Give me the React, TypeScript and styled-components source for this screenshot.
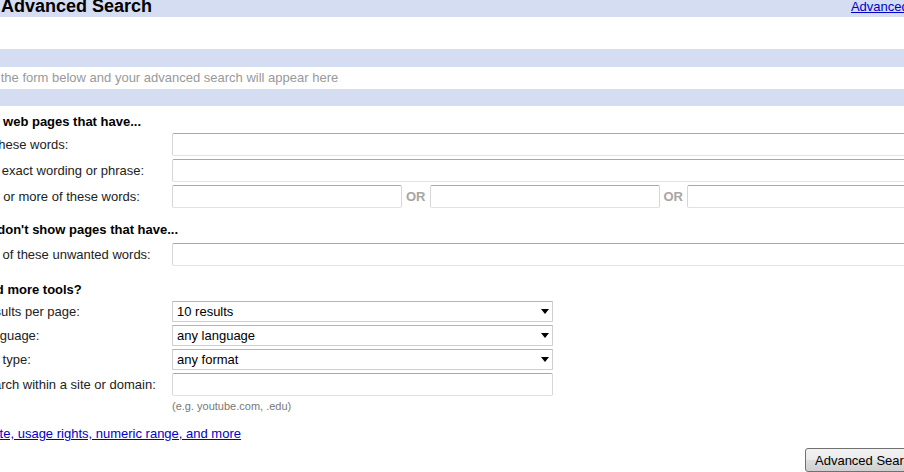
import React from "react";
import styled, { createGlobalStyle } from "styled-components";

const Global = createGlobalStyle`
  html, body { margin: 0; padding: 0; background: #fff; overflow: hidden; }
  body { font-family: "Liberation Sans", Arial, sans-serif; font-size: 13px; color: #222; }
`;

const Page = styled.div`
  width: 1013px;
  margin-left: -28px;
`;

const TopBar = styled.div`
  display: flex;
  align-items: flex-start;
  height: 17px;
  background: #d5ddf3;
  padding: 0 4px 0 29px;
`;

const Title = styled.h1`
  margin: 0;
  font-size: 18px;
  line-height: 13px;
  font-weight: bold;
  color: #000;
`;

const TopLinks = styled.div`
  margin-left: auto;
  line-height: 13px;
`;

const Link = styled.a`
  color: #0000cc;
  text-decoration: underline;
  font-size: 13px;
`;

const Spacer = styled.div<{ $h: number }>`
  height: ${(p) => p.$h}px;
`;

const Band = styled.div<{ $h: number }>`
  height: ${(p) => p.$h}px;
  background: #d5ddf3;
`;

const Desc = styled.div`
  height: 22px;
  line-height: 22px;
  padding-left: 2px;
  color: #999;
`;

const Section = styled.section<{ $top: number }>`
  margin-top: ${(p) => p.$top}px;
`;

const SectionHead = styled.h2<{ $gap: number }>`
  margin: 0 0 ${(p) => p.$gap}px;
  font-size: 13px;
  line-height: 20px;
  font-weight: bold;
  color: #000;
`;

const Grid = styled.div`
  display: grid;
  grid-template-columns: 200px 1fr;
  row-gap: 3px;
  align-items: center;
`;

const Label = styled.label`
  padding-left: 6px;
  color: #222;
`;

const TextInput = styled.input<{ $w?: number }>`
  box-sizing: border-box;
  height: 23px;
  width: ${(p) => (p.$w ? `${p.$w}px` : "100%")};
  margin: 0;
  padding: 0 4px;
  border: 1px solid #d6d6d6;
  border-top-color: #a8a8a8;
  border-bottom-color: #e2e2e2;
  border-radius: 2px;
  font: 13px "Liberation Sans", Arial, sans-serif;
  background: #fff;
  outline: none;
`;

const OrRow = styled.div`
  display: flex;
  align-items: center;
  gap: 4px;
`;

const Or = styled.span`
  font-weight: bold;
  color: #a6a6a6;
`;

const SelectWrap = styled.div`
  position: relative;
  width: 381px;
  height: 21px;
`;

const Select = styled.select`
  appearance: none;
  -webkit-appearance: none;
  box-sizing: border-box;
  width: 100%;
  height: 21px;
  margin: 0;
  padding: 0 20px 0 4px;
  border: 1px solid #cfcfcf;
  border-top-color: #b5b5b5;
  border-radius: 1px;
  background: #fff;
  color: #000;
  font: 13px "Liberation Sans", Arial, sans-serif;
  outline: none;
`;

const Arrow = styled.svg`
  position: absolute;
  right: 4px;
  top: 8px;
  pointer-events: none;
`;

const Hint = styled.div`
  grid-column: 2;
  font-size: 11px;
  line-height: 14px;
  color: #777;
`;

const MoreRow = styled.div`
  margin-top: 13px;
  padding-left: 11px;
  line-height: 16px;
`;

const ButtonRow = styled.div`
  margin-top: 6px;
  padding-left: 833px;
`;

const Button = styled.button`
  height: 24px;
  padding: 0 9px;
  border: 1px solid #707070;
  border-radius: 3px;
  background: linear-gradient(#f2f2f2, #ebebeb 50%, #dddddd 51%, #cfcfcf);
  font: 13px "Liberation Sans", Arial, sans-serif;
  color: #000;
  white-space: nowrap;
`;

const SiteInput = styled(TextInput)`
  width: 381px;
`;

const DropDown = ({ value, options }: { value: string; options: string[] }) => (
  <SelectWrap>
    <Select defaultValue={value}>
      {options.map((o) => (
        <option key={o}>{o}</option>
      ))}
    </Select>
    <Arrow width="8" height="5" viewBox="0 0 8 5">
      <polygon points="0,0 8,0 4,5" fill="#000" />
    </Arrow>
  </SelectWrap>
);

export default function App() {
  return (
    <>
      <Global />
      <Page>
        <TopBar>
          <Title>Advanced Search</Title>
          <TopLinks>
            <Link href="#">Advanced Search Tips</Link>
          </TopLinks>
        </TopBar>
        <Spacer $h={32} />
        <Band $h={18} />
        <Desc>Use the form below and your advanced search will appear here</Desc>
        <Band $h={17} />

        <Section $top={6}>
          <SectionHead $gap={1}>Find web pages that have...</SectionHead>
          <Grid>
            <Label>all these words:</Label>
            <TextInput />
            <Label>this exact wording or phrase:</Label>
            <TextInput />
            <Label>one or more of these words:</Label>
            <OrRow>
              <TextInput $w={230} />
              <Or>OR</Or>
              <TextInput $w={230} />
              <Or>OR</Or>
              <TextInput $w={230} />
            </OrRow>
          </Grid>
        </Section>

        <Section $top={12}>
          <SectionHead $gap={3}>But don't show pages that have...</SectionHead>
          <Grid>
            <Label>any of these unwanted words:</Label>
            <TextInput />
          </Grid>
        </Section>

        <Section $top={14}>
          <SectionHead $gap={1}>Need more tools?</SectionHead>
          <Grid>
            <Label>Results per page:</Label>
            <DropDown value="10 results" options={["10 results", "20 results", "30 results", "50 results", "100 results"]} />
            <Label>Language:</Label>
            <DropDown value="any language" options={["any language", "English", "French", "German"]} />
            <Label>File type:</Label>
            <DropDown value="any format" options={["any format", "Adobe Acrobat PDF (.pdf)", "Microsoft Word (.doc)"]} />
            <Label>Search within a site or domain:</Label>
            <SiteInput />
            <Hint>(e.g. youtube.com, .edu)</Hint>
          </Grid>
          <MoreRow>
            <Link href="#">Date, usage rights, numeric range, and more</Link>
          </MoreRow>
        </Section>

        <ButtonRow>
          <Button type="button">Advanced Search</Button>
        </ButtonRow>
      </Page>
    </>
  );
}
